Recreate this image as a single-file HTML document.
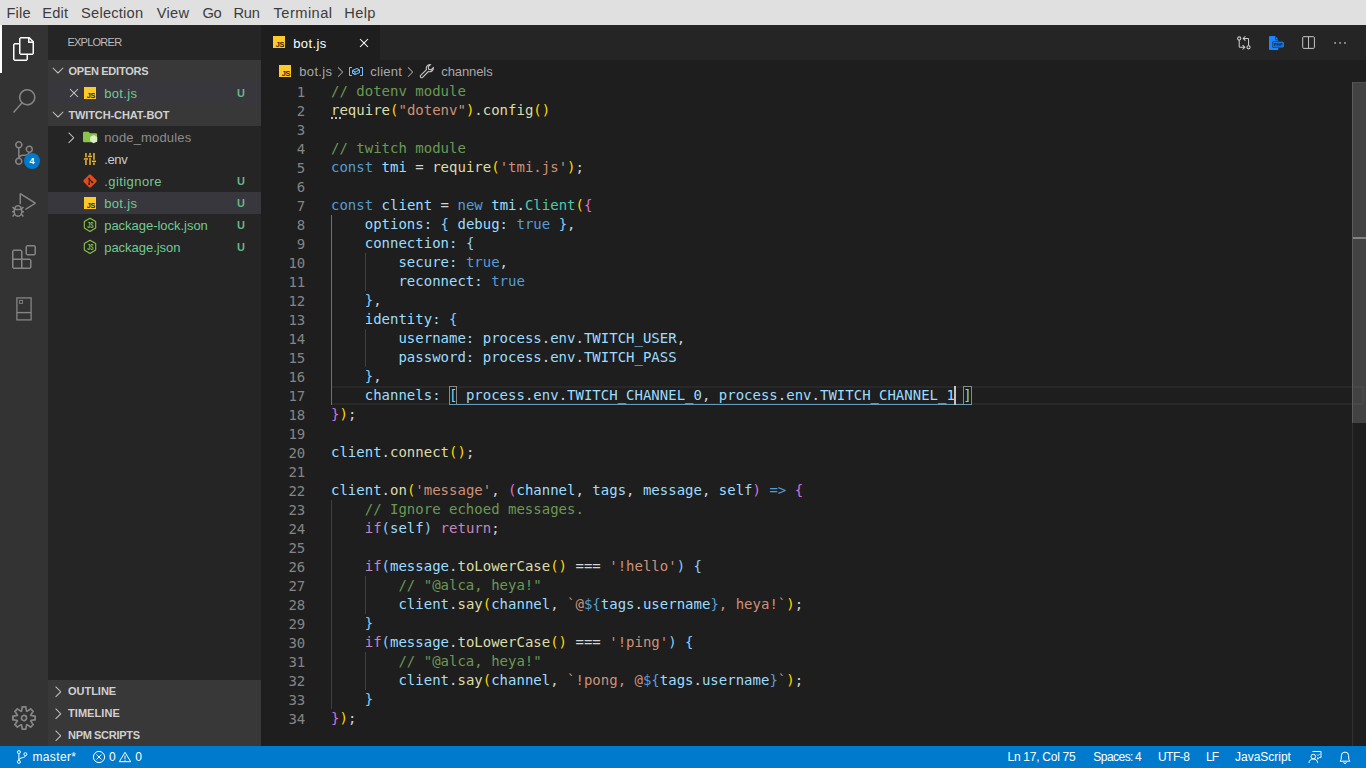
<!DOCTYPE html>
<html lang="en"><head><meta charset="utf-8"><title>bot.js - twitch-chat-bot - Visual Studio Code</title>
<style>
*{box-sizing:border-box}
html,body{margin:0;padding:0}
body{width:1366px;height:768px;overflow:hidden;background:#1e1e1e;position:relative;font-family:"Liberation Sans", "DejaVu Sans", sans-serif;-webkit-font-smoothing:antialiased}
.abs,.t,svg.i{position:absolute}
.t{white-space:pre;display:block}
#menubar{left:0;top:0;width:1366px;height:25px;background:#e0e0e0}
#activity{left:0;top:25px;width:48px;height:721px;background:#333333}
#sidebar{left:48px;top:25px;width:213px;height:721px;background:#252526}
.hdr{left:48px;width:213px;height:22px;background:#383838}
.row{left:48px;width:213px;height:22px;background:#37373d}
#tabs{left:261px;top:25px;width:1105px;height:35px;background:#252526}
#tab{left:261px;top:25px;width:119px;height:35px;background:#1e1e1e}
#status{left:0;top:746px;width:1366px;height:22px;background:#007acc}
#editor{left:261px;top:82px;width:1091px;height:664px;font-family:"DejaVu Sans Mono", "Liberation Mono", monospace;font-size:14px;line-height:19px;color:#d4d4d4}
.ln{height:19px;position:relative;padding-left:70px;white-space:pre}
.num{position:absolute;left:0;top:1px;width:44.3px;text-align:right;color:#858585}
.guide{width:1px;background:#404040}
.guide.a{background:#707070}
.bm{border:1px solid #888888}

.k-c{color:#6a9955}
.k-f{color:#dcdcaa}
.k-s{color:#ce9178}
.k-k{color:#569cd6}
.k-v{color:#9cdcfe}
.k-t{color:#4ec9b0}
.k-p{color:#d4d4d4}
.k-x{color:#c586c0}
.k-b1{color:#ffd700}
.k-b2{color:#da70d6}
.k-b3{color:#87cefa}
</style></head>
<body>
<div id="menubar" class="abs"></div>
<span class="t" style="left:6.4px;top:1px;height:25px;line-height:25px;font-size:14.67px;font-weight:400;color:#3c3c3c;letter-spacing:0.2px">File</span><span class="t" style="left:42.3px;top:1px;height:25px;line-height:25px;font-size:14.67px;font-weight:400;color:#3c3c3c;letter-spacing:0.167px">Edit</span><span class="t" style="left:81.1px;top:1px;height:25px;line-height:25px;font-size:14.67px;font-weight:400;color:#3c3c3c;letter-spacing:0.213px">Selection</span><span class="t" style="left:156.8px;top:1px;height:25px;line-height:25px;font-size:14.67px;font-weight:400;color:#3c3c3c;letter-spacing:0.267px">View</span><span class="t" style="left:202.6px;top:1px;height:25px;line-height:25px;font-size:14.67px;font-weight:400;color:#3c3c3c;letter-spacing:-0.4px">Go</span><span class="t" style="left:233.4px;top:1px;height:25px;line-height:25px;font-size:14.67px;font-weight:400;color:#3c3c3c;letter-spacing:-0.15px">Run</span><span class="t" style="left:273.5px;top:1px;height:25px;line-height:25px;font-size:14.67px;font-weight:400;color:#3c3c3c;letter-spacing:0.457px">Terminal</span><span class="t" style="left:344.3px;top:1px;height:25px;line-height:25px;font-size:14.67px;font-weight:400;color:#3c3c3c;letter-spacing:0.3px">Help</span>
<div id="activity" class="abs"></div>
<div class="abs" style="left:0;top:25px;width:2px;height:48px;background:#ffffff"></div>
<div id="sidebar" class="abs"></div>
<div class="abs hdr" style="top:60px"></div>
<div class="abs row" style="top:82px"></div>
<div class="abs hdr" style="top:104px"></div>
<div class="abs row" style="top:192px"></div>
<div class="abs hdr" style="top:680px;height:66px"></div>
<span class="t" style="left:67.4px;top:25px;height:35px;line-height:35px;font-size:11px;font-weight:400;color:#bbbbbb;letter-spacing:-0.743px">EXPLORER</span><span class="t" style="left:68.4px;top:60px;height:22px;line-height:22px;font-size:11px;font-weight:700;color:#d0d0d0;letter-spacing:-0.191px;word-spacing:-0.539px">OPEN EDITORS</span><span class="t" style="left:104.2px;top:83px;height:22px;line-height:22px;font-size:13px;font-weight:400;color:#73c991;letter-spacing:0.36px">bot.js</span><span class="t" style="left:237.1px;top:82px;height:22px;line-height:22px;font-size:11px;font-weight:700;color:#6bb585;letter-spacing:0px">U</span><span class="t" style="left:68.4px;top:104px;height:22px;line-height:22px;font-size:11px;font-weight:700;color:#d0d0d0;letter-spacing:-0.1px">TWITCH-CHAT-BOT</span>
<span class="t" style="left:104.2px;top:127px;height:22px;line-height:22px;font-size:13px;font-weight:400;color:#8c8c8c;letter-spacing:0.155px">node_modules</span><span class="t" style="left:104.2px;top:149px;height:22px;line-height:22px;font-size:13px;font-weight:400;color:#cccccc;letter-spacing:-0.333px">.env</span><span class="t" style="left:104.2px;top:171px;height:22px;line-height:22px;font-size:13px;font-weight:400;color:#73c991;letter-spacing:0.433px">.gitignore</span><span class="t" style="left:104.2px;top:193px;height:22px;line-height:22px;font-size:13px;font-weight:400;color:#73c991;letter-spacing:0.36px">bot.js</span><span class="t" style="left:104.2px;top:215px;height:22px;line-height:22px;font-size:13px;font-weight:400;color:#73c991;letter-spacing:-0.025px">package-lock.json</span><span class="t" style="left:104.2px;top:237px;height:22px;line-height:22px;font-size:13px;font-weight:400;color:#73c991;letter-spacing:-0.027px">package.json</span><span class="t" style="left:237.1px;top:170px;height:22px;line-height:22px;font-size:11px;font-weight:700;color:#6bb585;letter-spacing:0px">U</span><span class="t" style="left:237.1px;top:192px;height:22px;line-height:22px;font-size:11px;font-weight:700;color:#6bb585;letter-spacing:0px">U</span><span class="t" style="left:237.1px;top:214px;height:22px;line-height:22px;font-size:11px;font-weight:700;color:#6bb585;letter-spacing:0px">U</span><span class="t" style="left:237.1px;top:236px;height:22px;line-height:22px;font-size:11px;font-weight:700;color:#6bb585;letter-spacing:0px">U</span>
<span class="t" style="left:68.0px;top:680px;height:22px;line-height:22px;font-size:11px;font-weight:700;color:#d0d0d0;letter-spacing:-0.017px">OUTLINE</span><span class="t" style="left:68.0px;top:702px;height:22px;line-height:22px;font-size:11px;font-weight:700;color:#d0d0d0;letter-spacing:0.057px">TIMELINE</span><span class="t" style="left:68.0px;top:724px;height:22px;line-height:22px;font-size:11px;font-weight:700;color:#d0d0d0;letter-spacing:-0.25px;word-spacing:-0.539px">NPM SCRIPTS</span>
<div id="tabs" class="abs"></div>
<div id="tab" class="abs"></div>
<span class="t" style="left:293.2px;top:26px;height:35px;line-height:35px;font-size:13px;font-weight:400;color:#ffffff;letter-spacing:0.4px">bot.js</span><span class="t" style="left:299.3px;top:61px;height:22px;line-height:22px;font-size:13px;font-weight:400;color:#a9a9a9;letter-spacing:0.32px">bot.js</span><span class="t" style="left:370.3px;top:61px;height:22px;line-height:22px;font-size:13px;font-weight:400;color:#a9a9a9;letter-spacing:0.24px">client</span><span class="t" style="left:441.3px;top:61px;height:22px;line-height:22px;font-size:13px;font-weight:400;color:#a9a9a9;letter-spacing:-0.1px">channels</span>
<div id="status" class="abs"></div>
<span class="t" style="left:32.4px;top:746px;height:22px;line-height:22px;font-size:12px;font-weight:400;color:#ffffff;letter-spacing:0.383px">master*</span><span class="t" style="left:108.9px;top:746px;height:22px;line-height:22px;font-size:12px;font-weight:400;color:#ffffff;letter-spacing:0px">0</span><span class="t" style="left:135.2px;top:746px;height:22px;line-height:22px;font-size:12px;font-weight:400;color:#ffffff;letter-spacing:0px">0</span><span class="t" style="left:1007.5px;top:746px;height:22px;line-height:22px;font-size:12px;font-weight:400;color:#ffffff;letter-spacing:-0.117px;word-spacing:-0.588px">Ln 17, Col 75</span><span class="t" style="left:1093.3px;top:746px;height:22px;line-height:22px;font-size:12px;font-weight:400;color:#ffffff;letter-spacing:-0.537px;word-spacing:-0.588px">Spaces: 4</span><span class="t" style="left:1157.9px;top:746px;height:22px;line-height:22px;font-size:12px;font-weight:400;color:#ffffff;letter-spacing:-0.475px">UTF-8</span><span class="t" style="left:1206px;top:746px;height:22px;line-height:22px;font-size:12px;font-weight:400;color:#ffffff;letter-spacing:-1.0px">LF</span><span class="t" style="left:1235.1px;top:746px;height:22px;line-height:22px;font-size:12px;font-weight:400;color:#ffffff;letter-spacing:-0.022px">JavaScript</span>
<!-- activity bar icons -->
<svg class="i" style="left:12px;top:37px" width="24" height="24" viewBox="0 0 24 24"><path fill="#ffffff" d="M17.5 0h-9L7 1.5V6H2.5L1 7.5v15.07L2.5 24h12.07L16 22.57V18h4.7l1.3-1.43V4.5L17.5 0zm0 2.12l2.38 2.38H17.5V2.12zm-3 20.38h-12v-15H7v9.07L8.5 18h6v4.5zm6-6h-12v-15H16V6h4.5v10.5z"/></svg>
<svg class="i" style="left:12px;top:89px" width="24" height="24" viewBox="0 0 24 24"><path fill="#858585" d="M15.25 0a8.25 8.25 0 0 0-6.18 13.72L1 22.88l1.12 1 8.05-9.12A8.251 8.251 0 1 0 15.25.01V0zm0 15a6.75 6.75 0 1 1 0-13.5 6.75 6.75 0 0 1 0 13.5z"/></svg>
<svg class="i" style="left:12px;top:141px" width="24" height="24" viewBox="0 0 24 24"><path fill="#858585" d="M21.007 8.222A3.738 3.738 0 0 0 15.045 5.2a3.737 3.737 0 0 0 1.156 6.583 2.988 2.988 0 0 1-2.668 1.67h-2.99a4.456 4.456 0 0 0-2.989 1.165V7.4a3.737 3.737 0 1 0-1.494 0v9.117a3.776 3.776 0 1 0 1.816.099 2.99 2.99 0 0 1 2.668-1.667h2.99a4.484 4.484 0 0 0 4.223-3.039 3.736 3.736 0 0 0 3.25-3.687zM4.565 3.738a2.242 2.242 0 1 1 4.484 0 2.242 2.242 0 0 1-4.484 0zm4.484 16.441a2.242 2.242 0 1 1-4.484 0 2.242 2.242 0 0 1 4.484 0zm8.221-9.715a2.242 2.242 0 1 1 0-4.485 2.242 2.242 0 0 1 0 4.485z"/></svg>
<svg class="i" style="left:24px;top:153px" width="16" height="16" viewBox="0 0 16 16"><circle cx="8" cy="8" r="8" fill="#007acc"/><text x="8" y="11.2" text-anchor="middle" font-size="9" font-weight="700" fill="#ffffff" font-family="Liberation Sans, sans-serif">4</text></svg>
<svg class="i" style="left:12px;top:193px" width="24" height="24" viewBox="0 0 24 24"><path fill="#858585" d="M10.94 13.5l-1.32 1.32a3.73 3.73 0 0 0-7.24 0L1.06 13.5 0 14.56l1.72 1.72-.22.22V18H0v1.5h1.5v.08c.077.489.214.966.41 1.42L0 22.94 1.06 24l1.65-1.65A4.308 4.308 0 0 0 6 24a4.31 4.31 0 0 0 3.29-1.65L10.94 24 12 22.94 10.09 21c.198-.464.336-.951.41-1.45v-.1H12V18h-1.5v-1.5l-.22-.22L12 14.56l-1.06-1.06zM6 13.5a2.25 2.25 0 0 1 2.25 2.25h-4.5A2.25 2.25 0 0 1 6 13.5zm3 6a3.33 3.33 0 0 1-3 3 3.33 3.33 0 0 1-3-3v-2.250h6v2.250zm14.760-9.900v1.260L13.500 17.370V15.600l8.500-5.370L9 2v9.460a5.070 5.070 0 0 0-1.500-.720V.630L8.640 0l15.120 9.600z"/></svg>
<svg class="i" style="left:12px;top:245px" width="24" height="24" viewBox="0 0 24 24"><path fill="#858585" d="M13.5 1.5L15 0h7.5L24 1.5V9l-1.5 1.5H15L13.5 9V1.5zm1.5 0V9h7.5V1.5H15zM0 15V6l1.5-1.5H9L10.5 6v7.5H18l1.5 1.5v7.5L18 24H1.500L0 22.500V15zm9-1.500V6H1.500v7.500H9zM9 15H1.500v7.500H9V15zm1.500 7.500H18V15h-7.500v7.500z"/></svg>
<svg class="i" style="left:12px;top:293px" width="24" height="32" viewBox="0 0 24 32"><g fill="none" stroke="#858585"><rect x="4.9" y="4.9" width="14.2" height="22" stroke-width="1.3"/><path d="M4.9 19.6H19.1" stroke-width="1.4"/><rect x="7.6" y="7.4" width="3" height="3" stroke-width="0.9"/></g></svg>
<svg class="i" style="left:12px;top:706px" width="24" height="24" viewBox="0 0 24 24"><path fill="#858585" d="M19.85 8.75l4.15.83v4.84l-4.15.83 2.35 3.52-3.43 3.43-3.52-2.35-.83 4.15H9.580l-.83-4.15-3.52 2.35-3.43-3.43 2.35-3.52L0 14.420V9.580l4.150-.83L1.800 5.230 5.230 1.800l3.520 2.350L9.580 0h4.840l.83 4.150 3.520-2.350 3.430 3.430-2.350 3.520zm-1.570 5.070l4-.81v-2l-4-.81-.54-1.300 2.290-3.430-1.430-1.430-3.430 2.290-1.300-.54-.81-4h-2l-.81 4-1.300.54-3.430-2.290-1.430 1.430L6.380 8.900l-.54 1.300-4 .81v2l4 .81.54 1.300-2.290 3.430 1.430 1.430 3.430-2.290 1.300.54.81 4h2l.81-4 1.300-.54 3.430 2.290 1.430-1.430-2.290-3.430.54-1.300zm-8.186-4.672A3.430 3.430 0 0 1 12 8.570 3.440 3.440 0 0 1 15.430 12a3.430 3.430 0 1 1-5.336-2.852zm.956 4.274c.281.188.612.288.950.288A1.700 1.700 0 0 0 13.710 12a1.710 1.710 0 1 0-2.660 1.422z"/></svg>

<!-- sidebar chevrons -->
<svg class="i" style="left:49.100px;top:61.300px" width="18" height="18" viewBox="0 0 16 16"><path fill="#c5c5c5" d="M7.976 10.072l4.357-4.357.62.618L8.284 11h-.618L3 6.333l.619-.618 4.357 4.357z"/></svg>
<svg class="i" style="left:49.100px;top:105.200px" width="18" height="18" viewBox="0 0 16 16"><path fill="#c5c5c5" d="M7.976 10.072l4.357-4.357.62.618L8.284 11h-.618L3 6.333l.619-.618 4.357 4.357z"/></svg>
<svg class="i" style="left:62.400px;top:128.650px" width="17.600" height="17.600" viewBox="0 0 16 16"><path fill="#c5c5c5" d="M10.072 8.024L5.715 3.667l.618-.62L11 7.716v.618L6.333 13l-.618-.619 4.357-4.357z"/></svg>
<svg class="i" style="left:48.500px;top:682.650px" width="17.600" height="17.600" viewBox="0 0 16 16"><path fill="#c5c5c5" d="M10.072 8.024L5.715 3.667l.618-.62L11 7.716v.618L6.333 13l-.618-.619 4.357-4.357z"/></svg>
<svg class="i" style="left:48.500px;top:704.650px" width="17.600" height="17.600" viewBox="0 0 16 16"><path fill="#c5c5c5" d="M10.072 8.024L5.715 3.667l.618-.62L11 7.716v.618L6.333 13l-.618-.619 4.357-4.357z"/></svg>
<svg class="i" style="left:48.500px;top:726.650px" width="17.600" height="17.600" viewBox="0 0 16 16"><path fill="#c5c5c5" d="M10.072 8.024L5.715 3.667l.618-.62L11 7.716v.618L6.333 13l-.618-.619 4.357-4.357z"/></svg>
<!-- close icons -->
<svg class="i" style="left:65.9px;top:85px" width="16" height="16" viewBox="0 0 16 16"><path fill="#c5c5c5" d="M8 8.707l3.646 3.647.708-.707L8.707 8l3.647-3.646-.707-.708L8 7.293 4.354 3.646l-.707.708L7.293 8l-3.646 3.646.707.708L8 8.707z"/></svg>
<svg class="i" style="left:356.2px;top:35.1px" width="16" height="16" viewBox="0 0 16 16"><path fill="#ffffff" d="M8 8.707l3.646 3.647.708-.707L8.707 8l3.647-3.646-.707-.708L8 7.293 4.354 3.646l-.707.708L7.293 8l-3.646 3.646.707.708L8 8.707z"/></svg>
<!-- JS file icons -->
<svg class="i" style="left:84px;top:87px" width="12" height="12" viewBox="0 0 12 12"><rect width="12" height="12" fill="#ffca28"/><text x="10.800" y="10.900" text-anchor="end" font-size="7.300" font-weight="700" fill="#2e2600" font-family="Liberation Sans, sans-serif" letter-spacing="-0.500">JS</text></svg><svg class="i" style="left:84px;top:197px" width="12" height="12" viewBox="0 0 12 12"><rect width="12" height="12" fill="#ffca28"/><text x="10.800" y="10.900" text-anchor="end" font-size="7.300" font-weight="700" fill="#2e2600" font-family="Liberation Sans, sans-serif" letter-spacing="-0.500">JS</text></svg><svg class="i" style="left:273px;top:36px" width="12" height="12" viewBox="0 0 12 12"><rect width="12" height="12" fill="#ffca28"/><text x="10.800" y="10.900" text-anchor="end" font-size="7.300" font-weight="700" fill="#2e2600" font-family="Liberation Sans, sans-serif" letter-spacing="-0.500">JS</text></svg><svg class="i" style="left:279px;top:65px" width="12" height="12" viewBox="0 0 12 12"><rect width="12" height="12" fill="#ffca28"/><text x="10.800" y="10.900" text-anchor="end" font-size="7.300" font-weight="700" fill="#2e2600" font-family="Liberation Sans, sans-serif" letter-spacing="-0.500">JS</text></svg>
<!-- node_modules folder -->
<svg class="i" style="left:82px;top:129px" width="17" height="16" viewBox="0 0 17 16"><path fill="#8bc34a" d="M2.2 2.8h4.3l1.5 1.5h5.9a1.2 1.2 0 0 1 1.2 1.2v6.6a1.2 1.2 0 0 1-1.2 1.200H2.200a1.200 1.200 0 0 1-1.200-1.200V4a1.200 1.200 0 0 1 1.200-1.200z"/><path fill="#dcedc8" d="M11.700 6l3.500 2v4.300l-3.500 2-3.500-2V8z"/></svg>
<!-- .env tune icon -->
<svg class="i" style="left:82px;top:151px" width="16" height="16" viewBox="0 0 16 16"><g fill="#f0b92d"><rect x="3.200" y="2" width="1.500" height="4.300"/><rect x="3.200" y="9" width="1.500" height="5"/><rect x="1.900" y="7.200" width="4.100" height="1.500"/><rect x="7.250" y="2" width="1.500" height="2.200"/><rect x="7.250" y="6.800" width="1.500" height="7.200"/><rect x="5.950" y="4.600" width="4.100" height="1.500"/><rect x="11.200" y="2" width="1.500" height="6.800"/><rect x="11.200" y="11.600" width="1.500" height="2.400"/><rect x="9.900" y="9.600" width="4.100" height="1.500"/></g></svg>
<!-- .gitignore git icon -->
<svg class="i" style="left:82px;top:173px" width="16" height="16" viewBox="0 0 16 16"><rect x="2.900" y="2.900" width="10.200" height="10.200" rx="1.300" fill="#e64a19" transform="rotate(45 8 8)"/><g stroke="#252526" stroke-width="1.100" fill="none"><path d="M7.200 4.800v7M7.200 6.200l2.900 2.900"/></g><circle cx="7.200" cy="11" r="1" fill="#252526"/><circle cx="10.300" cy="9.300" r="1" fill="#252526"/><circle cx="7.200" cy="5.800" r="0.900" fill="#252526"/></svg>
<!-- node json icons -->
<svg class="i" style="left:82px;top:217px" width="16" height="16" viewBox="0 0 16 16"><path d="M8 1.200l5.700 3.300v6.600L8 14.400l-5.700-3.300V4.500z" fill="none" stroke="#8bc34a" stroke-width="1.100" stroke-linejoin="round"/><text transform="translate(8.300 11.200) scale(0.580 1)" text-anchor="middle" font-size="9.200" font-weight="700" fill="#8bc34a" font-family="Liberation Sans, sans-serif" letter-spacing="-0.300">JS</text></svg><svg class="i" style="left:82px;top:239px" width="16" height="16" viewBox="0 0 16 16"><path d="M8 1.200l5.700 3.300v6.600L8 14.400l-5.700-3.300V4.500z" fill="none" stroke="#8bc34a" stroke-width="1.100" stroke-linejoin="round"/><text transform="translate(8.300 11.200) scale(0.580 1)" text-anchor="middle" font-size="9.200" font-weight="700" fill="#8bc34a" font-family="Liberation Sans, sans-serif" letter-spacing="-0.300">JS</text></svg>
<!-- breadcrumb icons -->
<svg class="i" style="left:331.600px;top:63.700px" width="16" height="16" viewBox="0 0 16 16"><path fill="#a9a9a9" d="M10.072 8.024L5.715 3.667l.618-.62L11 7.716v.618L6.333 13l-.618-.619 4.357-4.357z"/></svg>
<svg class="i" style="left:402.100px;top:63.700px" width="16" height="16" viewBox="0 0 16 16"><path fill="#a9a9a9" d="M10.072 8.024L5.715 3.667l.618-.62L11 7.716v.618L6.333 13l-.618-.619 4.357-4.357z"/></svg>
<svg class="i" style="left:347.700px;top:63.400px" width="16" height="16" viewBox="0 0 16 16"><path fill="#75beff" d="M2 5h2V4H1.500l-.5.500v8l.5.500H4v-1H2V5zm12.500-1H12v1h2v7h-2v1h2.500l.5-.500v-8l-.5-.500zm-2.740 2.570L12 7v2.510l-.300.450-4.500 2h-.460l-2.500-1.500-.240-.430v-2.500l.300-.460 4.500-2h.460l2.500 1.500zM5 9.710l1.500.900V9.280L5 8.380v1.330zm.580-2.150l1.450.870 3.390-1.500-1.450-.870-3.390 1.500zm1.950 3.170l3.500-1.560v-1.400l-3.500 1.550v1.410z"/></svg>
<svg class="i" style="left:419px;top:63.400px" width="16" height="16" viewBox="0 0 16 16"><path fill="none" stroke="#c5c5c5" stroke-width="1.100" d="M14.300 4.600a3.600 3.600 0 0 1-4.900 3.900L3.600 14.300a1.300 1.300 0 0 1-1.900-1.900l5.800-5.800a3.600 3.600 0 0 1 3.900-4.900L9.200 3.900l.5 2.400 2.400.5 2.200-2.200z"/></svg>
<!-- editor toolbar -->
<svg class="i" style="left:1236px;top:35px" width="16" height="16" viewBox="0 0 16 16"><g fill="none" stroke="#cccccc" stroke-width="1.050"><circle cx="3.200" cy="3.450" r="1.600"/><circle cx="12.550" cy="12.250" r="1.600"/><path d="M3.200 5.100v6.400a0.800 0.800 0 0 0 0.800 0.800h4.500M6.600 10.100l2.200 2.200-2.200 2.200"/><path d="M12.550 10.600V4.250a0.800 0.800 0 0 0-0.800-0.800H7.300M9.400 1.250L7.200 3.450l2.200 2.200"/></g></svg>
<svg class="i" style="left:1268px;top:35px" width="17" height="16" viewBox="0 0 17 16"><path fill="#1a85ff" d="M2.100 1h5.200v4.200h3v9.800H2.100A1.100 1.100 0 0 1 1 13.900V2.100A1.100 1.100 0 0 1 2.100 1z"/><path fill="#1a85ff" d="M7.900 1.700l2.400 2.900H7.900z"/><rect x="4.300" y="6.300" width="12" height="6.600" rx="1.400" fill="#252526"/><rect x="5.100" y="7.100" width="10.400" height="5" rx="0.900" fill="#1769c9" stroke="#1a85ff" stroke-width="0.800"/><text x="10.300" y="11.100" text-anchor="middle" font-size="4.200" font-weight="700" fill="#14294d" font-family="Liberation Sans, sans-serif" letter-spacing="0.100">PHP</text></svg>
<svg class="i" style="left:1300px;top:34px" width="16" height="16" viewBox="0 0 16 16"><g fill="none" stroke="#c5c5c5" stroke-width="1"><rect x="2.700" y="2.700" width="11.700" height="11.700" rx="1"/><path d="M8.550 2.700v11.700"/></g></svg>
<svg class="i" style="left:1332px;top:35px" width="16" height="16" viewBox="0 0 16 16"><g fill="#c5c5c5"><rect x="2.400" y="7.200" width="1.500" height="1.500"/><rect x="7.300" y="7.200" width="1.500" height="1.500"/><rect x="12.200" y="7.200" width="1.500" height="1.500"/></g></svg>
<!-- status bar icons -->
<svg class="i" style="left:14px;top:749px" width="16" height="16" viewBox="0 0 16 16"><g fill="none" stroke="#ffffff" stroke-width="1"><circle cx="4.900" cy="3.100" r="1.500"/><circle cx="4.900" cy="12.900" r="1.500"/><circle cx="11.400" cy="5.200" r="1.500"/><path d="M4.900 4.600v6.800M11.400 6.700c0 2.600-6.500 1.500-6.500 4.500"/></g></svg>
<svg class="i" style="left:90.700px;top:749.100px" width="16" height="16" viewBox="0 0 16 16"><g fill="none" stroke="#ffffff" stroke-width="1"><circle cx="8" cy="8" r="5.600"/><path d="M5.500 5.500l5 5M10.500 5.500l-5 5"/></g></svg>
<svg class="i" style="left:116.800px;top:749px" width="16" height="16" viewBox="0 0 16 16"><g fill="none" stroke="#ffffff" stroke-width="1"><path d="M8 3.300l5.700 9.400H2.300z" stroke-linejoin="round"/><path d="M8 6.500v3.400M8 10.700v1.100"/></g></svg>
<svg class="i" style="left:1306.500px;top:749px" width="16" height="16" viewBox="0 0 16 16"><g fill="none" stroke="#ffffff" stroke-width="1"><path d="M5.500 2.500h8.500v6h-1.800l-1.700 1.700V8.500"/><circle cx="6.300" cy="7.600" r="2.300"/><path d="M2 14c0-2.600 1.900-4 4.300-4s4.300 1.400 4.300 4"/><path d="M10 5.600l1 1 1.800-1.800" stroke-width="0.8"/></g></svg>
<svg class="i" style="left:1336.600px;top:748.500px" width="16" height="16" viewBox="0 0 16 16"><g fill="none" stroke="#ffffff" stroke-width="1"><path d="M3 12.200h10c-.9-.9-1.300-1.800-1.300-3.200V6.800a3.700 3.700 0 0 0-7.400 0V9c0 1.400-.4 2.300-1.300 3.200z" stroke-linejoin="round"/><path d="M6.700 13.200a1.300 1.300 0 0 0 2.600 0"/></g></svg>

<!-- editor decorations -->
<div class="abs" style="left:332px;top:386px;width:1032px;height:19px;border-top:2px solid #282828;border-bottom:2px solid #282828;border-right:2px solid #282828"></div>
<div class="abs guide a" style="left:331px;top:215px;height:190px"></div>
<div class="abs guide" style="left:365px;top:253px;height:38px"></div>
<div class="abs guide" style="left:365px;top:329px;height:38px"></div>
<div class="abs guide" style="left:331px;top:500px;height:209px"></div>
<div class="abs guide" style="left:365px;top:576px;height:38px"></div>
<div class="abs guide" style="left:365px;top:652px;height:38px"></div>
<div class="abs" style="left:449px;top:386px;width:8.400px;height:19px;border:1px solid #888888;background:#161e16"></div>
<div class="abs" style="left:963.200px;top:386px;width:8.600px;height:19px;border:1px solid #888888;background:#161e16"></div>
<div class="abs" style="left:449px;top:404px;width:523px;height:1px;background:#6a9bb8"></div>
<div class="abs" style="left:331px;top:117px;width:2px;height:2px;background:#c0c0c0;box-shadow:4px 0 0 #c0c0c0,8px 0 0 #c0c0c0"></div>
<div id="editor" class="abs">
<div class="ln"><span class="num">1</span><span class="k-c">// dotenv module</span></div>
<div class="ln"><span class="num">2</span><span class="k-f">require</span><span class="k-b1">(</span><span class="k-s">"dotenv"</span><span class="k-b1">)</span><span class="k-p">.</span><span class="k-f">config</span><span class="k-b1">()</span></div>
<div class="ln"><span class="num">3</span></div>
<div class="ln"><span class="num">4</span><span class="k-c">// twitch module</span></div>
<div class="ln"><span class="num">5</span><span class="k-k">const</span><span class="k-p"> </span><span class="k-v">tmi</span><span class="k-p"> = </span><span class="k-f">require</span><span class="k-b1">(</span><span class="k-s">'tmi.js'</span><span class="k-b1">)</span><span class="k-p">;</span></div>
<div class="ln"><span class="num">6</span></div>
<div class="ln"><span class="num">7</span><span class="k-k">const</span><span class="k-p"> </span><span class="k-v">client</span><span class="k-p"> = </span><span class="k-k">new</span><span class="k-p"> </span><span class="k-v">tmi</span><span class="k-p">.</span><span class="k-t">Client</span><span class="k-b1">(</span><span class="k-b2">{</span></div>
<div class="ln"><span class="num">8</span><span class="k-p">    </span><span class="k-v">options:</span><span class="k-p"> </span><span class="k-b3">{</span><span class="k-p"> </span><span class="k-v">debug:</span><span class="k-p"> </span><span class="k-k">true</span><span class="k-p"> </span><span class="k-b3">}</span><span class="k-p">,</span></div>
<div class="ln"><span class="num">9</span><span class="k-p">    </span><span class="k-v">connection:</span><span class="k-p"> </span><span class="k-b3">{</span></div>
<div class="ln"><span class="num">10</span><span class="k-p">        </span><span class="k-v">secure:</span><span class="k-p"> </span><span class="k-k">true</span><span class="k-p">,</span></div>
<div class="ln"><span class="num">11</span><span class="k-p">        </span><span class="k-v">reconnect:</span><span class="k-p"> </span><span class="k-k">true</span></div>
<div class="ln"><span class="num">12</span><span class="k-p">    </span><span class="k-b3">}</span><span class="k-p">,</span></div>
<div class="ln"><span class="num">13</span><span class="k-p">    </span><span class="k-v">identity:</span><span class="k-p"> </span><span class="k-b3">{</span></div>
<div class="ln"><span class="num">14</span><span class="k-p">        </span><span class="k-v">username:</span><span class="k-p"> </span><span class="k-v">process</span><span class="k-p">.</span><span class="k-v">env</span><span class="k-p">.</span><span class="k-v">TWITCH_USER</span><span class="k-p">,</span></div>
<div class="ln"><span class="num">15</span><span class="k-p">        </span><span class="k-v">password:</span><span class="k-p"> </span><span class="k-v">process</span><span class="k-p">.</span><span class="k-v">env</span><span class="k-p">.</span><span class="k-v">TWITCH_PASS</span></div>
<div class="ln"><span class="num">16</span><span class="k-p">    </span><span class="k-b3">}</span><span class="k-p">,</span></div>
<div class="ln"><span class="num">17</span><span class="k-p">    </span><span class="k-v">channels:</span><span class="k-p"> </span><span class="k-b3">[</span><span class="k-p"> </span><span class="k-v">process</span><span class="k-p">.</span><span class="k-v">env</span><span class="k-p">.</span><span class="k-v">TWITCH_CHANNEL_0</span><span class="k-p">, </span><span class="k-v">process</span><span class="k-p">.</span><span class="k-v">env</span><span class="k-p">.</span><span class="k-v">TWITCH_CHANNEL_1</span><span class="k-p"> </span><span class="k-b3">]</span></div>
<div class="ln"><span class="num">18</span><span class="k-b2">}</span><span class="k-b1">)</span><span class="k-p">;</span></div>
<div class="ln"><span class="num">19</span></div>
<div class="ln"><span class="num">20</span><span class="k-v">client</span><span class="k-p">.</span><span class="k-f">connect</span><span class="k-b1">()</span><span class="k-p">;</span></div>
<div class="ln"><span class="num">21</span></div>
<div class="ln"><span class="num">22</span><span class="k-v">client</span><span class="k-p">.</span><span class="k-f">on</span><span class="k-b1">(</span><span class="k-s">'message'</span><span class="k-p">, </span><span class="k-b2">(</span><span class="k-v">channel</span><span class="k-p">, </span><span class="k-v">tags</span><span class="k-p">, </span><span class="k-v">message</span><span class="k-p">, </span><span class="k-v">self</span><span class="k-b2">)</span><span class="k-p"> </span><span class="k-k">=&gt;</span><span class="k-p"> </span><span class="k-b2">{</span></div>
<div class="ln"><span class="num">23</span><span class="k-p">    </span><span class="k-c">// Ignore echoed messages.</span></div>
<div class="ln"><span class="num">24</span><span class="k-p">    </span><span class="k-x">if</span><span class="k-b3">(</span><span class="k-v">self</span><span class="k-b3">)</span><span class="k-p"> </span><span class="k-x">return</span><span class="k-p">;</span></div>
<div class="ln"><span class="num">25</span></div>
<div class="ln"><span class="num">26</span><span class="k-p">    </span><span class="k-x">if</span><span class="k-b3">(</span><span class="k-v">message</span><span class="k-p">.</span><span class="k-f">toLowerCase</span><span class="k-b1">()</span><span class="k-p"> === </span><span class="k-s">'!hello'</span><span class="k-b3">)</span><span class="k-p"> </span><span class="k-b3">{</span></div>
<div class="ln"><span class="num">27</span><span class="k-p">        </span><span class="k-c">// "@alca, heya!"</span></div>
<div class="ln"><span class="num">28</span><span class="k-p">        </span><span class="k-v">client</span><span class="k-p">.</span><span class="k-f">say</span><span class="k-b1">(</span><span class="k-v">channel</span><span class="k-p">, </span><span class="k-s">`@</span><span class="k-k">${</span><span class="k-v">tags</span><span class="k-p">.</span><span class="k-v">username</span><span class="k-k">}</span><span class="k-s">, heya!`</span><span class="k-b1">)</span><span class="k-p">;</span></div>
<div class="ln"><span class="num">29</span><span class="k-p">    </span><span class="k-b3">}</span></div>
<div class="ln"><span class="num">30</span><span class="k-p">    </span><span class="k-x">if</span><span class="k-b3">(</span><span class="k-v">message</span><span class="k-p">.</span><span class="k-f">toLowerCase</span><span class="k-b1">()</span><span class="k-p"> === </span><span class="k-s">'!ping'</span><span class="k-b3">)</span><span class="k-p"> </span><span class="k-b3">{</span></div>
<div class="ln"><span class="num">31</span><span class="k-p">        </span><span class="k-c">// "@alca, heya!"</span></div>
<div class="ln"><span class="num">32</span><span class="k-p">        </span><span class="k-v">client</span><span class="k-p">.</span><span class="k-f">say</span><span class="k-b1">(</span><span class="k-v">channel</span><span class="k-p">, </span><span class="k-s">`!pong, @</span><span class="k-k">${</span><span class="k-v">tags</span><span class="k-p">.</span><span class="k-v">username</span><span class="k-k">}</span><span class="k-s">`</span><span class="k-b1">)</span><span class="k-p">;</span></div>
<div class="ln"><span class="num">33</span><span class="k-p">    </span><span class="k-b3">}</span></div>
<div class="ln"><span class="num">34</span><span class="k-b2">}</span><span class="k-b1">)</span><span class="k-p">;</span></div>
</div>
<div class="abs" style="left:954px;top:386px;width:2px;height:19px;background:#c4c4c4"></div>
<!-- scrollbar -->
<div class="abs" style="left:1352px;top:82px;width:1px;height:664px;background:#303030"></div>
<div class="abs" style="left:1352px;top:82px;width:14px;height:341px;background:rgba(121,121,121,0.4);border-left:1px solid rgba(150,150,150,0.22);border-top:1px solid rgba(150,150,150,0.15)"></div>
<div class="abs" style="left:1353px;top:237px;width:13px;height:2px;background:#828282"></div>

</body></html>
